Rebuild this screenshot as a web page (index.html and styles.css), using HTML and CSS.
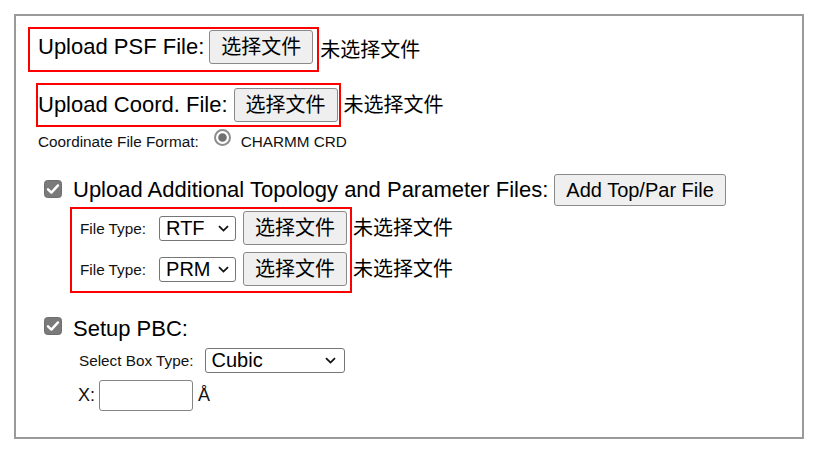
FILE: index.html
```html
<!DOCTYPE html>
<html lang="zh-CN">
<head>
<meta charset="utf-8">
<title>Upload Files</title>
<link rel="stylesheet" href="styles.css">
</head>
<body>
<div class="panel">
  <div class="row r1">
    <div class="hl hl1">
      <span class="lbl lbl1">Upload PSF File:</span>
      <span class="btn cjk btn1">选择文件</span>
    </div>
    <span class="nofile cjk">未选择文件</span>
  </div>

  <div class="row r2">
    <div class="hl hl2">
      <span class="lbl lbl2">Upload Coord. File:</span>
      <span class="btn cjk btn2">选择文件</span>
    </div>
    <span class="nofile cjk nf2">未选择文件</span>
  </div>

  <div class="row r3">
    <span class="small fmt">Coordinate File Format:</span>
    <svg class="radio" width="17" height="17" viewBox="0 0 17 17">
      <circle cx="8.5" cy="8.5" r="7.5" fill="#fff" stroke="#8c8c8c" stroke-width="2"/>
      <circle cx="8.5" cy="8.5" r="4.3" fill="#707070"/>
    </svg>
    <span class="small fmt crd">CHARMM CRD</span>
  </div>

  <div class="row r4">
    <svg class="check" width="18" height="18" viewBox="0 0 18 18">
      <rect x="0.5" y="0.5" width="17" height="17" rx="3" fill="#7a7a7a" stroke="#6e6e6e"/>
      <path d="M4 9.3 L7.4 12.6 L14 5.4" fill="none" stroke="#fff" stroke-width="2.4" stroke-linecap="round" stroke-linejoin="round"/>
    </svg>
    <span class="lbl lbl4">Upload Additional Topology and Parameter Files:</span>
    <span class="btn btn-latin">Add Top/Par File</span>
  </div>

  <div class="row r5">
    <div class="hl hl3">
      <div class="ftrow">
        <span class="small">File Type:</span>
        <div class="select sel-ft">
          <span class="sel-text">RTF</span>
          <svg class="chev" width="11" height="7" viewBox="0 0 11 7"><path d="M1 1.2 L5.5 5.6 L10 1.2" fill="none" stroke="#111" stroke-width="1.8"/></svg>
        </div>
        <span class="btn cjk btn3">选择文件</span>
      </div>
      <div class="ftrow">
        <span class="small">File Type:</span>
        <div class="select sel-ft">
          <span class="sel-text">PRM</span>
          <svg class="chev" width="11" height="7" viewBox="0 0 11 7"><path d="M1 1.2 L5.5 5.6 L10 1.2" fill="none" stroke="#111" stroke-width="1.8"/></svg>
        </div>
        <span class="btn cjk btn3">选择文件</span>
      </div>
    </div>
    <div class="nofiles">
      <span class="nofile cjk">未选择文件</span>
      <span class="nofile cjk">未选择文件</span>
    </div>
  </div>

  <div class="row r6">
    <svg class="check check6" width="18" height="18" viewBox="0 0 18 18">
      <rect x="0.5" y="0.5" width="17" height="17" rx="3" fill="#7a7a7a" stroke="#6e6e6e"/>
      <path d="M4 9.3 L7.4 12.6 L14 5.4" fill="none" stroke="#fff" stroke-width="2.4" stroke-linecap="round" stroke-linejoin="round"/>
    </svg>
    <span class="lbl lbl6">Setup PBC:</span>
  </div>

  <div class="row r7">
    <span class="small">Select Box Type:</span>
    <div class="select sel-box">
      <span class="sel-text">Cubic</span>
      <svg class="chev" width="11" height="7" viewBox="0 0 11 7"><path d="M1 1.2 L5.5 5.6 L10 1.2" fill="none" stroke="#111" stroke-width="1.8"/></svg>
    </div>
  </div>

  <div class="row r8">
    <span class="xlbl">X:</span>
    <span class="input"></span>
    <span class="xlbl unit">Å</span>
  </div>
</div>
</body>
</html>
```

FILE: styles.css
```css
* { box-sizing: border-box; }

html, body {
  margin: 0;
  padding: 0;
  background: #fff;
}

body {
  font-family: "Liberation Sans", Arial, "Noto Sans CJK SC", sans-serif;
  color: #000;
}

.cjk {
  font-family: "Liberation Sans", Arial, "Noto Sans CJK SC", sans-serif;
}

.panel {
  margin: 14px 0 0 14px;
  width: 790px;
  height: 425px;
  border: 2px solid #9a9a9a;
  display: flex;
  flex-direction: column;
  align-items: flex-start;
}

.row {
  display: flex;
  align-items: center;
}

/* red highlight boxes */
.hl {
  border: 2px solid #ff0000;
  display: flex;
}

.lbl {
  font-size: 22px;
  line-height: 26px;
  white-space: nowrap;
}

.small {
  font-size: 15.3px;
  line-height: 17px;
  color: #111;
  white-space: nowrap;
}

.btn {
  display: inline-flex;
  align-items: center;
  justify-content: center;
  background: #efefef;
  border: 1px solid #8a8a8a;
  border-radius: 3px;
  font-size: 20px;
  line-height: 24px;
  height: 34px;
  padding: 0 11px;
  white-space: nowrap;
  color: #000;
}

.btn-latin {
  height: 32px;
  line-height: 22px;
  padding: 0 11px;
}

.nofile {
  font-size: 20px;
  line-height: 24px;
  white-space: nowrap;
  margin-left: 1px;
}

/* row 1 */
.r1 { margin-top: 11px; margin-left: 12px; }
.hl1 {
  height: 45px;
  padding: 0 4px 0 8px;
  align-items: flex-start;
  gap: 5px;
}
.lbl1 { margin-top: 5px; }
.btn1 { margin-top: 1px; }

/* row 2 */
.r2 { margin-top: 11px; margin-left: 20px; }
.hl2 {
  height: 44px;
  padding: 0 1px 0 0;
  align-items: flex-start;
  gap: 6px;
}
.lbl2 { margin-top: 7px; }
.btn2 { margin-top: 3px; }
.nf2 { margin-left: 3px; }

/* row 3: coordinate format */
.r3 {
  margin-top: 2px;
  margin-left: 22px;
  height: 20px;
  align-items: flex-start;
}
.fmt { margin-top: 4px; }
.radio { margin-left: 15px; display: block; }
.crd { margin-left: 10px; }

/* row 4: additional files */
.r4 {
  margin-top: 24px;
  margin-left: 28px;
  height: 33px;
}
.check { display: block; flex: none; }
.r4 .check { margin-bottom: 2px; }
.lbl4 { margin-left: 11px; }
.btn-latin { margin-left: 6px; }

/* row 5: file type block */
.r5 {
  margin-top: 1px;
  margin-left: 54px;
  align-items: flex-start;
}
.hl3 {
  flex-direction: column;
  gap: 7px;
  padding: 2px 3px 5px 8px;
}
.ftrow {
  display: flex;
  align-items: center;
  height: 34px;
}

.select {
  display: flex;
  align-items: center;
  justify-content: space-between;
  background: #fff;
  border: 1px solid #767676;
  border-radius: 3px;
  height: 25px;
  font-size: 20px;
  line-height: 23px;
}
.sel-ft {
  width: 77px;
  margin-left: 13px;
  padding: 0 6px 0 6px;
}
.sel-text { white-space: nowrap; }
.chev { display: block; flex: none; }
.btn3 { margin-left: 7px; }

.nofiles {
  display: flex;
  flex-direction: column;
  gap: 7px;
  padding-top: 4px;
}
.nofiles .nofile {
  height: 34px;
  display: flex;
  align-items: center;
}

/* row 6: setup PBC */
.r6 {
  margin-top: 23px;
  margin-left: 28px;
  align-items: flex-start;
}
.check6 { margin-top: 1px; }
.lbl6 { margin-left: 11px; }

/* row 7: box type */
.r7 {
  margin-top: 6px;
  margin-left: 63px;
  height: 25px;
}
.sel-box {
  width: 140px;
  margin-left: 11px;
  padding: 0 8px 0 6px;
}

/* row 8: X */
.r8 {
  margin-top: 7px;
  margin-left: 62px;
  height: 31px;
}
.xlbl {
  font-size: 18px;
  line-height: 21px;
  color: #111;
}
.input {
  display: block;
  width: 94px;
  height: 31px;
  margin-left: 4px;
  border: 1px solid #858585;
  border-radius: 3px;
  background: #fff;
}
.unit { margin-left: 5px; }
```
